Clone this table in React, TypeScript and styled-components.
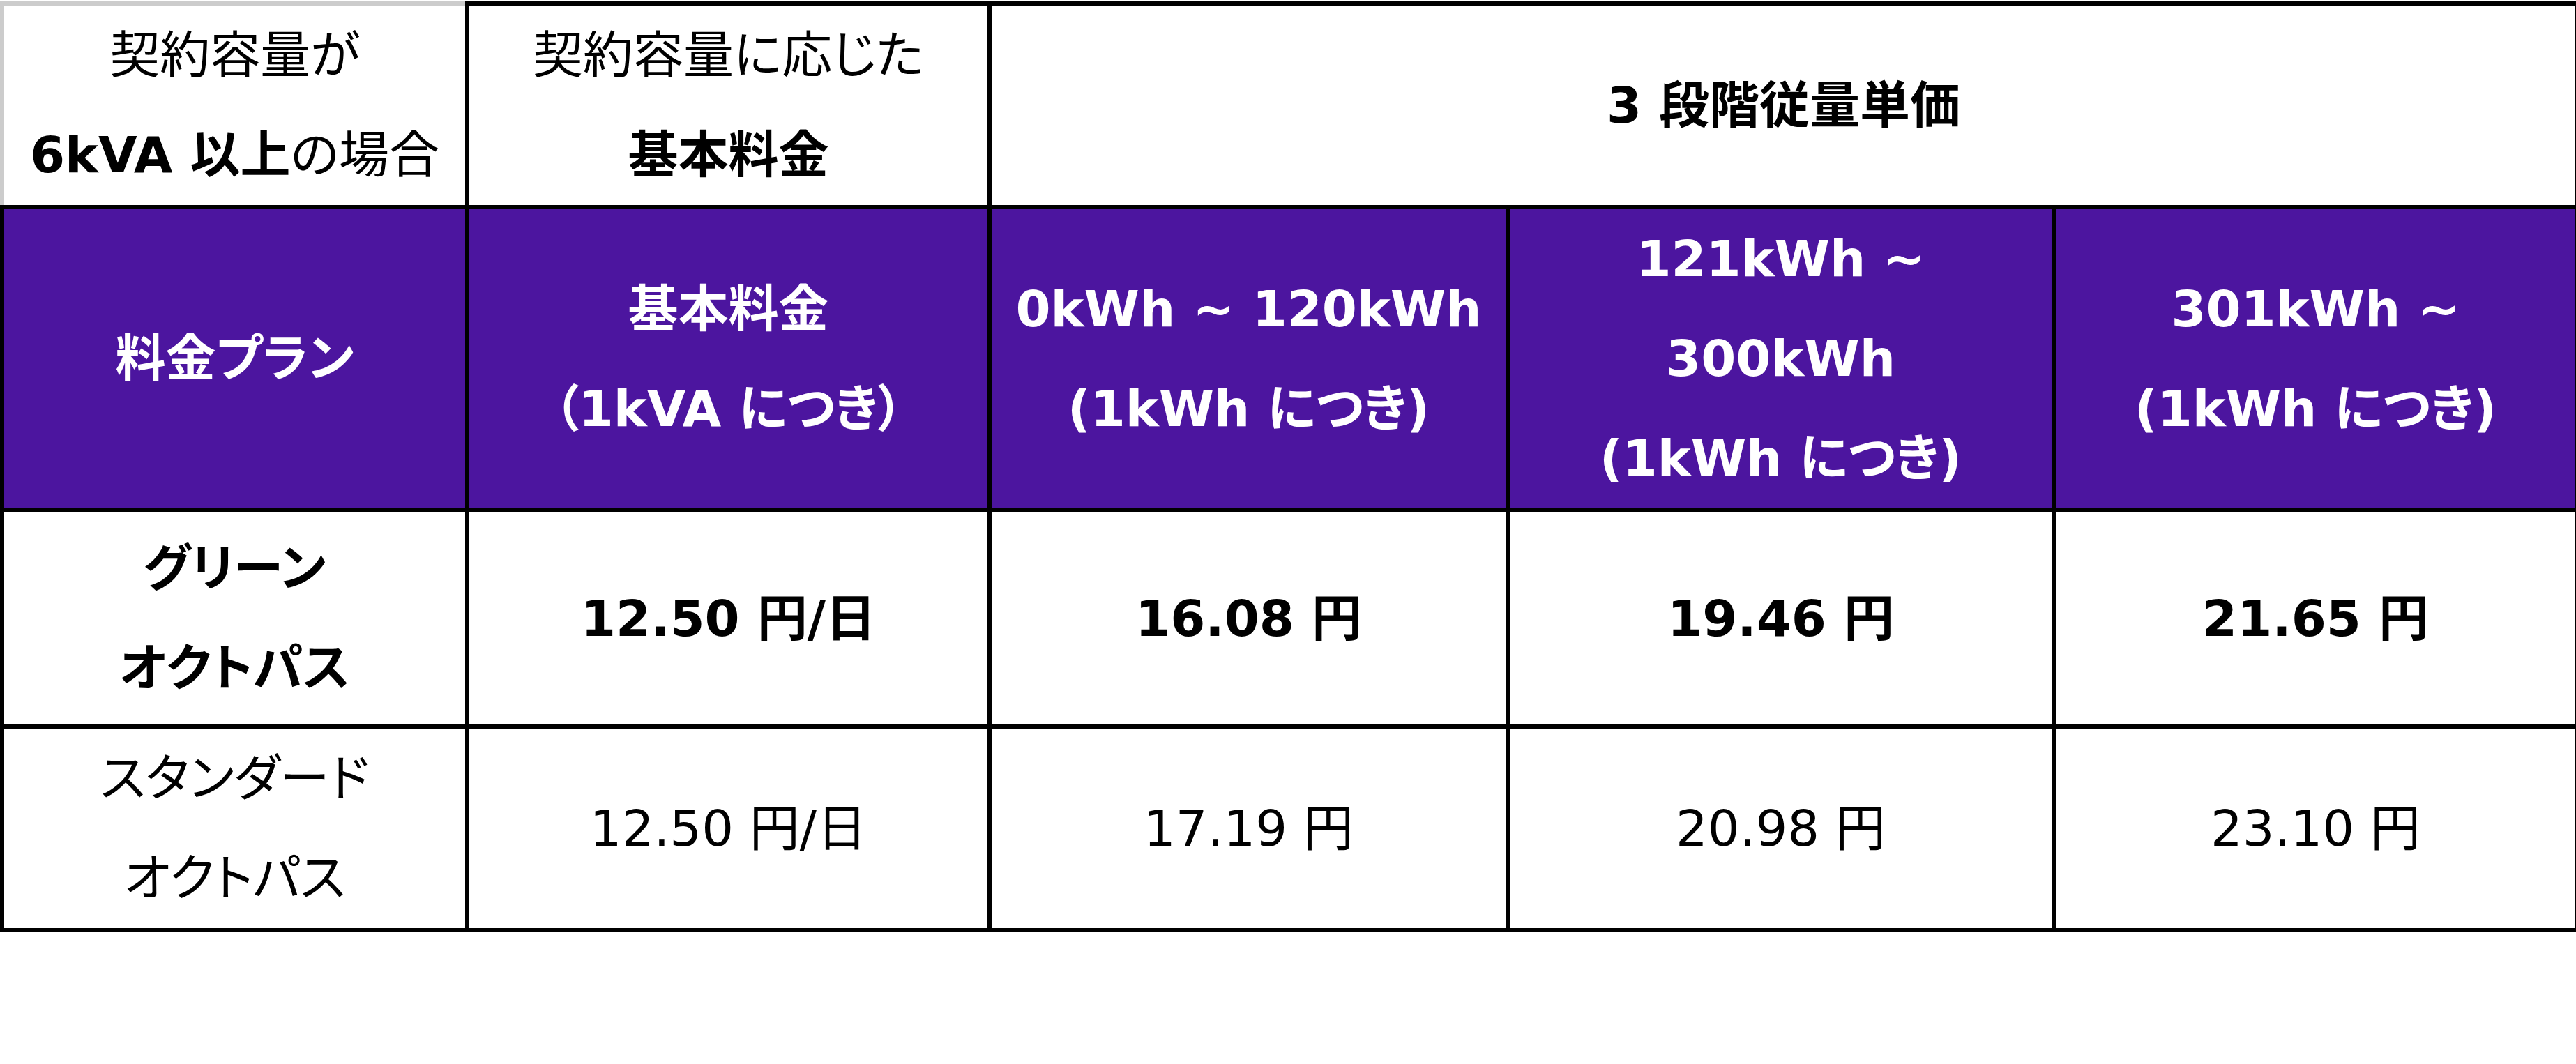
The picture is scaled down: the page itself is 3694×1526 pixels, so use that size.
import styled, { createGlobalStyle } from 'styled-components'

const GlobalStyle = createGlobalStyle`
  html, body {
    margin: 0;
    padding: 0;
    background: #fff;
  }
  body {
    font-family: "DejaVu Sans", "Noto Sans CJK JP", sans-serif;
    font-feature-settings: "palt";
  }
`

const PURPLE = '#4c159f'

const Page = styled.div`
  padding-top: 2px;
`

const Table = styled.table`
  width: 3693px;
  border-collapse: collapse;
  table-layout: fixed;
`

const Row = styled.tr<{ $h: number }>`
  height: ${p => p.$h}px;
`

const Cell = styled.td<{ $head?: boolean; $bold?: boolean }>`
  border: 6px solid #000;
  padding: 0;
  text-align: center;
  vertical-align: middle;
  font-size: 72px;
  line-height: 143px;
  white-space: nowrap;
  font-weight: ${p => (p.$bold ? 700 : 400)};
  color: ${p => (p.$head ? '#fff' : '#000')};
  background: ${p => (p.$head ? PURPLE : '#fff')};
`

const CornerCell = styled(Cell)`
  border-top-color: #cccccc;
  border-left-color: #cccccc;
`

const Line = styled.span`
  display: block;
`

const Strong = styled.b`
  font-weight: 700;
`

const tiers = [
  ['0kWh ~ 120kWh', '(1kWh につき)'],
  ['121kWh ~', '300kWh', '(1kWh につき)'],
  ['301kWh ~', '(1kWh につき)'],
]

const plans = [
  { name: ['グリーン', 'オクトパス'], base: '12.50 円/日', prices: ['16.08 円', '19.46 円', '21.65 円'], bold: true, h: 310 },
  { name: ['スタンダード', 'オクトパス'], base: '12.50 円/日', prices: ['17.19 円', '20.98 円', '23.10 円'], bold: false, h: 290 },
]

export default function App() {
  return (
    <Page>
      <GlobalStyle />
      <Table>
        <colgroup>
          <col style={{ width: 667 }} />
          <col style={{ width: 749 }} />
          <col style={{ width: 743 }} />
          <col style={{ width: 783 }} />
          <col style={{ width: 751 }} />
        </colgroup>
        <tbody>
          <Row $h={291}>
            <CornerCell>
              <Line>契約容量が</Line>
              <Line>
                <Strong>6kVA 以上</Strong>の場合
              </Line>
            </CornerCell>
            <Cell>
              <Line>契約容量に応じた</Line>
              <Line>
                <Strong>基本料金</Strong>
              </Line>
            </Cell>
            <Cell colSpan={3} $bold>
              3 段階従量単価
            </Cell>
          </Row>
          <Row $h={433}>
            <Cell $head $bold>
              料金プラン
            </Cell>
            <Cell $head $bold>
              <Line>基本料金</Line>
              <Line>（1kVA につき）</Line>
            </Cell>
            {tiers.map((lines, i) => (
              <Cell key={i} $head $bold>
                {lines.map(l => (
                  <Line key={l}>{l}</Line>
                ))}
              </Cell>
            ))}
          </Row>
          {plans.map(plan => (
            <Row key={plan.base + plan.prices[0]} $h={plan.h}>
              <Cell $bold={plan.bold}>
                {plan.name.map(n => (
                  <Line key={n}>{n}</Line>
                ))}
              </Cell>
              <Cell $bold={plan.bold}>{plan.base}</Cell>
              {plan.prices.map(p => (
                <Cell key={p} $bold={plan.bold}>
                  {p}
                </Cell>
              ))}
            </Row>
          ))}
        </tbody>
      </Table>
    </Page>
  )
}
